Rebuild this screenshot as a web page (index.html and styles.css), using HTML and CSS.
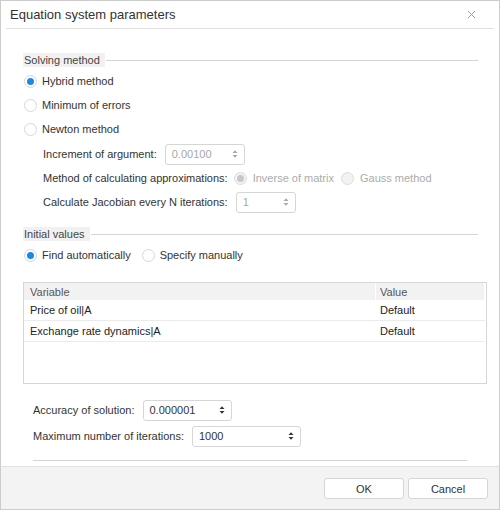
FILE: index.html
```html
<!DOCTYPE html>
<html>
<head>
<meta charset="utf-8">
<link rel="stylesheet" href="styles.css">
</head>
<body>
<div class="dialog">
  <div class="header">
    <span class="title">Equation system parameters</span>
    <svg class="close" width="9" height="9" viewBox="0 0 9 9"><path d="M1 1L8 8M8 1L1 8" stroke="#9a9a9a" stroke-width="1" fill="none"/></svg>
  </div>
  <div class="body">
    <div class="legend"><span class="legend-text">Solving method</span><span class="legend-line"></span></div>
    <div class="group">
      <div class="row"><span class="radio checked"></span><span class="label">Hybrid method</span></div>
      <div class="row"><span class="radio"></span><span class="label">Minimum of errors</span></div>
      <div class="row"><span class="radio"></span><span class="label">Newton method</span></div>
    </div>
    <div class="sub">
      <div class="row">
        <span class="label">Increment of argument:</span>
        <div class="spin disabled w80"><span class="val">0.00100</span>
          <svg class="arrows" width="6" height="10" viewBox="0 0 6 10"><path d="M0.5 4L3 1.2L5.5 4Z M0.5 6L3 8.8L5.5 6Z" fill="#a8a8a8"/></svg>
        </div>
      </div>
      <div class="row">
        <span class="label">Method of calculating approximations:</span>
        <span class="radio dis-checked ml3"></span><span class="label dis">Inverse of matrix</span>
        <span class="radio dis-un ml6"></span><span class="label dis">Gauss method</span>
      </div>
      <div class="row">
        <span class="label">Calculate Jacobian every N iterations:</span>
        <div class="spin disabled w60"><span class="val">1</span>
          <svg class="arrows" width="6" height="10" viewBox="0 0 6 10"><path d="M0.5 4L3 1.2L5.5 4Z M0.5 6L3 8.8L5.5 6Z" fill="#a8a8a8"/></svg>
        </div>
      </div>
    </div>
    <div class="legend legend2"><span class="legend-text">Initial values</span><span class="legend-line"></span></div>
    <div class="group">
      <div class="row">
        <span class="radio checked"></span><span class="label">Find automatically</span>
        <span class="radio ml11"></span><span class="label">Specify manually</span>
      </div>
    </div>
    <div class="grid">
      <div class="ghead">
        <div class="c1">Variable</div>
        <div class="c2">Value</div>
      </div>
      <div class="grow">
        <div class="c1">Price of oil|A</div>
        <div class="c2">Default</div>
      </div>
      <div class="grow">
        <div class="c1">Exchange rate dynamics|A</div>
        <div class="c2">Default</div>
      </div>
    </div>
    <div class="bottom">
      <div class="brow">
        <span class="label">Accuracy of solution:</span>
        <div class="spin w88"><span class="val dark">0.000001</span>
          <svg class="arrows" width="6" height="10" viewBox="0 0 6 10"><path d="M0.5 4L3 1.2L5.5 4Z M0.5 6L3 8.8L5.5 6Z" fill="#333"/></svg>
        </div>
      </div>
      <div class="brow">
        <span class="label">Maximum number of iterations:</span>
        <div class="spin w108"><span class="val dark">1000</span>
          <svg class="arrows" width="6" height="10" viewBox="0 0 6 10"><path d="M0.5 4L3 1.2L5.5 4Z M0.5 6L3 8.8L5.5 6Z" fill="#333"/></svg>
        </div>
      </div>
      <div class="sep"></div>
    </div>
  </div>
  <div class="footer">
    <button class="btn">OK</button>
    <button class="btn">Cancel</button>
  </div>
</div>
</body>
</html>
```
FILE: styles.css
```css
html, body {
  margin: 0;
  padding: 0;
  background: #fff;
}
body {
  font-family: "Liberation Sans", Arial, sans-serif;
  font-size: 11px;
  color: #333;
}
.dialog {
  box-sizing: border-box;
  width: 500px;
  height: 510px;
  border: 1px solid #cccccc;
  display: flex;
  flex-direction: column;
  background: #fff;
}
.header {
  height: 27px;
  margin: 0 5px;
  border-bottom: 1px solid #e0e0e0;
  display: flex;
  align-items: center;
  justify-content: space-between;
  padding: 0 18px 0 4px;
}
.title {
  font-size: 13px;
  color: #333;
}
.close {
  display: block;
}
.body {
  flex: 1;
  padding: 24px 12px 0 22px;
}
.legend {
  height: 14px;
  display: flex;
  align-items: center;
  margin-right: 9px;
}
.legend2 {
  margin-top: 13px;
}
.legend-text {
  background: #f1f1f1;
  height: 14px;
  line-height: 14px;
  padding: 0 5px 0 1px;
  color: #444;
}
.legend-line {
  flex: 1;
  height: 1px;
  background: #d5d5d5;
  margin-left: 1px;
}
.group {
  margin-top: 2px;
}
.row {
  height: 24px;
  display: flex;
  align-items: center;
}
.radio {
  box-sizing: border-box;
  width: 13px;
  height: 13px;
  border-radius: 50%;
  border: 1px solid #d6d6d6;
  background: #fff;
  margin: 0 5px 0 1px;
  display: flex;
  align-items: center;
  justify-content: center;
  flex: none;
}
.radio.checked::after {
  content: "";
  width: 7px;
  height: 7px;
  border-radius: 50%;
  background: #1e88e5;
}
.radio.dis-checked {
  background: #f2f2f2;
  border-color: #dcdcdc;
}
.radio.dis-checked::after {
  content: "";
  width: 7px;
  height: 7px;
  border-radius: 50%;
  background: #c8c8c8;
}
.radio.dis-un {
  background: #f2f2f2;
  border-color: #dcdcdc;
}
.dis-checked, .dis-un {
  margin-right: 6px;
}
.ml3 { margin-left: 6px; }
.ml6 { margin-left: 7px; }
.ml11 { margin-left: 11px; }
.label.dis {
  color: #ababab;
}
.sub {
  margin-top: 1px;
  padding-left: 20px;
}
.spin {
  box-sizing: border-box;
  height: 21px;
  border: 1px solid #d6d6d6;
  border-radius: 3px;
  margin-left: 8px;
  display: flex;
  align-items: center;
  justify-content: space-between;
  padding: 0 6px 0 6px;
  background: #fff;
}
.spin.disabled .val {
  color: #a8a8a8;
}
.val.dark {
  color: #333;
}
.w80 { width: 80px; }
.w60 { width: 60px; }
.w88 { width: 89px; }
.w108 { width: 109px; }
.arrows {
  display: block;
}
.grid {
  margin-top: 15px;
  box-sizing: border-box;
  height: 102px;
  border: 1px solid #d6d6d6;
  padding: 0 1px 0 0;
}
.ghead {
  height: 17px;
  display: flex;
  background: #f2f2f2;
  color: #555;
  margin-right: 1px;
}
.ghead .c1 {
  border-right: 1px solid #fff;
}
.grow {
  height: 20px;
  display: flex;
  border-bottom: 1px solid #ebebeb;
  color: #222;
}
.c1 {
  box-sizing: border-box;
  width: 352px;
  padding-left: 6px;
  display: flex;
  align-items: center;
}
.c2 {
  flex: 1;
  padding-left: 4px;
  display: flex;
  align-items: center;
}
.bottom {
  margin-top: 13px;
  padding-left: 10px;
}
.brow {
  height: 26px;
  display: flex;
  align-items: center;
}
.sep {
  margin-top: 11px;
  height: 1px;
  background: #d5d5d5;
  width: 434px;
}
.footer {
  border-top: 1px solid #e2e2e2;
  background: #f3f3f3;
  display: flex;
  justify-content: flex-end;
  align-items: flex-start;
  padding: 11px 11px 0 0;
  box-sizing: border-box;
  height: 43px;
  gap: 4px;
}
.btn {
  width: 80px;
  height: 21px;
  background: #fff;
  border: 1px solid #d6d6d6;
  border-radius: 3px;
  font-family: "Liberation Sans", Arial, sans-serif;
  font-size: 11px;
  color: #333;
  padding: 0;
}
```
